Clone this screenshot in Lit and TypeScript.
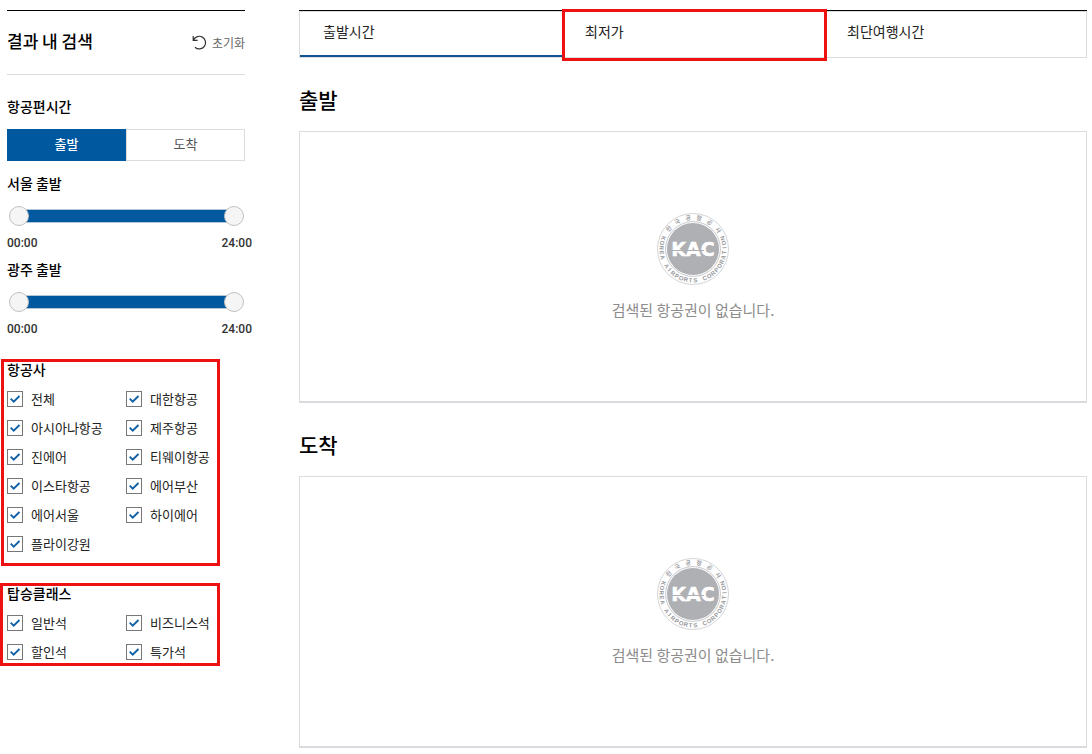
import { LitElement, html, svg, css } from "lit";
import { customElement, property, state } from "lit/decorators.js";

const AIRLINES = [
  "전체", "대한항공", "아시아나항공", "제주항공", "진에어", "티웨이항공",
  "이스타항공", "에어부산", "에어서울", "하이에어", "플라이강원",
];
const CLASSES = ["일반석", "비즈니스석", "할인석", "특가석"];
const TABS = ["출발시간", "최저가", "최단여행시간"];

/* Upper ring of the emblem: glyph and its angle from the top. */
const RING_TOP = [
  ["한", -50], ["국", -30], ["공", -9], ["항", 11], ["공", 32], ["사", 53],
] as const;

/* Lower ring: letters spread evenly over 220 degrees, left to right through the bottom. */
const RING_BOTTOM = [..."KOREA AIRPORTS CORPORATION"]
  .map((glyph, i) => ({ glyph, angle: 110 - i * 8.8 }))
  .filter(({ glyph }) => glyph !== " ");

@customElement("kac-emblem")
class KacEmblem extends LitElement {
  static styles = css`
    :host { display: block; width: 72px; height: 72px; }
    .emblem { display: block; width: 100%; height: 100%; }
    .outer { fill: #fff; stroke: #c9cacd; stroke-width: 0.8; }
    .inner { fill: none; stroke: #b9babd; stroke-width: 0.8; }
    .disc { fill: #afb0b4; }
    .kac { font: bold 19px "DejaVu Sans", sans-serif; fill: #fff; stroke: #fff; stroke-width: 0.5; text-anchor: middle; }
    .streak { stroke: #afb0b4; stroke-width: 1; fill: none; }
    .ring-ko { font: 500 6px "Noto Sans CJK KR", sans-serif; fill: #8d8e92; text-anchor: middle; }
    .ring-en { font: bold 6px "Liberation Sans", sans-serif; fill: #97989c; text-anchor: middle; }
  `;
  render() {
    return html`<svg class="emblem" viewBox="0 0 72 72" role="img" aria-label="KAC">
      <circle class="outer" cx="36" cy="36" r="35.5"></circle>
      <circle class="inner" cx="36" cy="36" r="27.4"></circle>
      <circle class="disc" cx="36" cy="36" r="26"></circle>
      <text class="kac" x="36" y="43">KAC</text>
      <path class="streak" d="M13 37.5H47"></path>
      ${RING_TOP.map(([glyph, angle]) => svg`<text class="ring-ko" x="36" y="6.7" transform="rotate(${angle} 36 36)">${glyph}</text>`)}
      ${RING_BOTTOM.map(({ glyph, angle }) => svg`<text class="ring-en" x="36" y="69.5" transform="rotate(${angle} 36 36)">${glyph}</text>`)}
    </svg>`;
  }
}

@customElement("time-range")
class TimeRange extends LitElement {
  @property() label = "";
  @state() from = 0;
  @state() to = 24;

  static styles = css`
    :host { display: block; }
    .name { font-size: 14px; font-weight: 500; line-height: 20px; color: #000; }
    .rail { display: grid; align-items: center; height: 20px; margin-top: 13px; padding: 0 1px 0 2px; }
    .bar, .thumb { grid-area: 1 / 1; }
    .bar { height: 12px; margin: 0 10px; background: #00589f; border: 1px solid #b4c6d5; }
    .thumb { appearance: none; width: 100%; height: 20px; margin: 0; background: none; pointer-events: none; }
    .thumb::-webkit-slider-thumb {
      appearance: none; box-sizing: border-box; width: 20px; height: 20px; border-radius: 50%;
      background: #f5f5f5; border: 1px solid #c0c0c0; pointer-events: auto; cursor: pointer;
    }
    .times { display: flex; justify-content: space-between; margin: 9px -7px 0 0; font: 500 12px/16px Roboto, sans-serif; color: #333; }
  `;
  private clock(h: number) {
    return `${String(h).padStart(2, "0")}:00`;
  }
  render() {
    return html`
      <div class="name">${this.label}</div>
      <div class="rail">
        <div class="bar"></div>
        <input class="thumb" type="range" min="0" max="24" .value=${String(this.from)} aria-label="${this.label} 시작"
          @input=${(e: Event) => (this.from = +(e.target as HTMLInputElement).value)} />
        <input class="thumb" type="range" min="0" max="24" .value=${String(this.to)} aria-label="${this.label} 끝"
          @input=${(e: Event) => (this.to = +(e.target as HTMLInputElement).value)} />
      </div>
      <div class="times"><span>${this.clock(this.from)}</span><span>${this.clock(this.to)}</span></div>
    `;
  }
}

@customElement("app-root")
class AppRoot extends LitElement {
  @state() leg = 0;
  @state() tab = 0;

  static styles = css`
    :host { display: block; font-family: "Noto Sans CJK KR", "Noto Sans", sans-serif; color: #222; background: #fff; }
    * { box-sizing: border-box; }
    button { font-family: inherit; cursor: pointer; margin: 0; }
    h2, h3 { margin: 0; color: #000; }
    .page { display: grid; grid-template-columns: 238px minmax(0, 1fr); gap: 54px; padding: 10px 5px 6px 7px; }

    .head { display: flex; justify-content: space-between; align-items: center; height: 65px; border-top: 1px solid #000; border-bottom: 1px solid #dcdcdc; }
    .head-title { padding-bottom: 4px; font-size: 17px; font-weight: 500; line-height: 24px; }
    .reset { display: flex; align-items: center; gap: 5px; padding: 0; border: 0; background: none; font-size: 12px; line-height: 20px; color: #666; }
    .reset-icon { width: 15px; height: 15px; fill: none; stroke: #333; stroke-width: 1.2; }
    .group-title { font-size: 14px; font-weight: 500; line-height: 20px; }
    .flight-time { margin-top: 21px; }
    .legs { display: grid; grid-template-columns: 1fr 1fr; margin: 13px 0 12px; }
    .leg { height: 32px; padding: 0 0 2px; font-size: 13px; line-height: 20px; color: #555; background: #fff; border: 1px solid #dcdcdc; }
    .leg.on { color: #fff; font-weight: 500; background: #00589f; border-color: #00589f; }
    .ranges { display: grid; gap: 8px; }

    .marked { position: relative; }
    .marked::after { content: ""; position: absolute; border: 3px solid #ee1111; pointer-events: none; }
    .airlines { margin-top: 22px; }
    .airlines::after { inset: 0 25px -8px -6px; }
    .classes { margin-top: 25px; }
    .classes::after { inset: 0 25px 0 -7px; }
    .checks { display: grid; grid-template-columns: 1fr 1fr; margin-top: 5px; }
    .check { display: flex; align-items: center; gap: 8px; height: 29px; font-size: 13px; line-height: 20px; white-space: nowrap; }
    .box {
      appearance: none; flex: none; width: 16px; height: 16px; margin: 0; background: #fff; border: 1px solid #777;
    }
    .box:checked {
      background: #fff url("data:image/svg+xml,%3Csvg xmlns='http://www.w3.org/2000/svg' viewBox='0 0 14 14'%3E%3Cpath d='M2.7 6.7 5.7 9.7 11.5 4' fill='none' stroke='%231260a6' stroke-width='1.9'/%3E%3C/svg%3E") center / 14px 14px;
    }

    .tabs { display: grid; grid-template-columns: repeat(3, 1fr); border: 1px solid #dcdcdc; box-shadow: 0 -1px #000; margin-top: 1px; }
    .tab { height: 45px; padding: 0 0 6px 23px; border: 0; border-bottom: 2px solid transparent; background: none; text-align: left; font-size: 14px; line-height: 20px; color: #222; }
    .tab.on { border-bottom-color: #0d5594; }
    .tab.marked::after { inset: -3px -3px -6px 0; }
    .result-title { font-size: 21px; font-weight: 500; line-height: 30px; }
    .result { margin-top: 26px; }
    .empty { display: flex; flex-direction: column; align-items: center; gap: 14px; margin-top: 17px; padding: 81px 16px 78px; border: 1px solid #dcdcdc; border-bottom: 2px solid #d9dbde; }
    .note { margin: 0; font-size: 15px; line-height: 22px; padding-bottom: 2px; color: #8c8c8c; }
  `;

  private checks(names: string[]) {
    return html`<div class="checks">
      ${names.map((n) => html`<label class="check"><input class="box" type="checkbox" checked />${n}</label>`)}
    </div>`;
  }

  render() {
    return html`<div class="page">
      <aside>
        <div class="head">
          <h2 class="head-title">결과 내 검색</h2>
          <button class="reset" type="button">
            <svg class="reset-icon" viewBox="0 0 15 15" aria-hidden="true">
              <path d="M1.2 1V5.4H5.6M1.5 5.1A6.3 6.3 0 1 1 3 12.2"></path>
            </svg>초기화
          </button>
        </div>
        <section class="flight-time">
          <h3 class="group-title">항공편시간</h3>
          <div class="legs">
            ${["출발", "도착"].map((n, i) => html`<button type="button" class="leg ${this.leg === i ? "on" : ""}" @click=${() => (this.leg = i)}>${n}</button>`)}
          </div>
          <div class="ranges">
            <time-range label="서울 출발"></time-range>
            <time-range label="광주 출발"></time-range>
          </div>
        </section>
        <section class="airlines marked">
          <h3 class="group-title">항공사</h3>
          ${this.checks(AIRLINES)}
        </section>
        <section class="classes marked">
          <h3 class="group-title">탑승클래스</h3>
          ${this.checks(CLASSES)}
        </section>
      </aside>
      <main>
        <div class="tabs">
          ${TABS.map((n, i) => html`<button type="button" class="tab ${this.tab === i ? "on" : ""} ${i === 1 ? "marked" : ""}" @click=${() => (this.tab = i)}>${n}</button>`)}
        </div>
        ${["출발", "도착"].map((n) => html`<section class="result">
          <h2 class="result-title">${n}</h2>
          <div class="empty"><kac-emblem></kac-emblem><p class="note">검색된 항공권이 없습니다.</p></div>
        </section>`)}
      </main>
    </div>`;
  }
}
